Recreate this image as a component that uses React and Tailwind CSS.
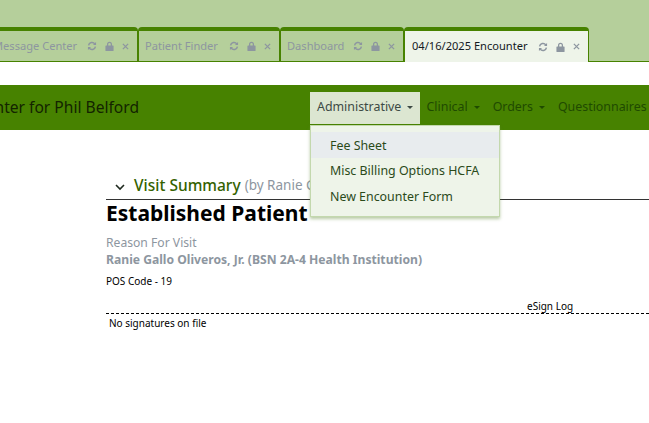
import React from "react";

const font = { fontFamily: '"Noto Sans", "Open Sans", sans-serif' };

function Icons() {
  return (
    <div className="flex items-center gap-[8px] shrink-0 text-[#8d96a0]">
      <svg width="10" height="10" viewBox="0 0 16 16" fill="none" stroke="currentColor" strokeWidth="2.4">
        <path d="M2.5 7a5.6 5.6 0 0 1 10-2.4" />
        <path d="M13.5 9a5.6 5.6 0 0 1-10 2.4" />
        <path d="M14.5 1.5v5h-5z" fill="currentColor" stroke="none" />
        <path d="M1.5 14.5v-5h5z" fill="currentColor" stroke="none" />
      </svg>
      <svg width="9" height="10" viewBox="0 0 14 16" fill="currentColor">
        <path d="M3 7V5a4 4 0 0 1 8 0v2h1.5a1 1 0 0 1 1 1v7a1 1 0 0 1-1 1h-11a1 1 0 0 1-1-1V8a1 1 0 0 1 1-1zm2 0h4V5a2 2 0 0 0-4 0z" />
      </svg>
      <svg width="7" height="7" viewBox="0 0 8 8" stroke="currentColor" strokeWidth="1.5">
        <path d="M1 1l6 6M7 1L1 7" />
      </svg>
    </div>
  );
}

function Tab({ label, width, active }) {
  return (
    <div
      className={`shrink-0 flex items-center justify-between pr-[8px] rounded-t-[4px] border-t-[4px] border-x border-[#478200] ${
        active ? "h-[35px] -mb-px pl-[7px] bg-[#eef4e9] text-[#14191f]" : "h-[34px] pl-[6px] bg-[#b5cf9b] text-[#8d96a0]"
      }`}
      style={{ width }}
    >
      <span className="text-[11.1px] whitespace-nowrap">{label}</span>
      <Icons />
    </div>
  );
}

function NavItem({ label, active }) {
  return (
    <div
      className={`shrink-0 flex items-center gap-[6px] h-[32px] text-[12.4px] whitespace-nowrap ${
        active ? "bg-[#dce6d1] text-[#3d4a45] pl-[7px] w-[110px]" : "text-[#1f4a00] px-[6.5px]"
      }`}
    >
      <span>{label}</span>
      {label !== "Questionnaires" && (
        <span className="w-0 h-0 border-x-[3px] border-x-transparent border-t-[3px] border-t-current" />
      )}
    </div>
  );
}

export default function App() {
  return (
    <div className="relative w-[649px] h-[423px] overflow-hidden bg-white" style={font}>
      <div className="h-[62px] bg-[#b5cf9b] border-b border-[#478200] flex items-end">
        <div className="flex items-end -ml-[14px]">
          <Tab label="Message Center" width={152} />
          <Tab label="Patient Finder" width={142} />
          <Tab label="Dashboard" width={124} />
          <Tab label="04/16/2025 Encounter" width={185} active />
        </div>
      </div>

      <div className="mt-[23px] h-[45px] bg-[#478200] flex items-center overflow-hidden">
        <div className="shrink-0 w-[310px] text-[15.6px] text-[#132400] whitespace-nowrap flex justify-end pr-[171px]">
          <span>nter for Phil Belford</span>
        </div>
        <NavItem label="Administrative" active />
        <NavItem label="Clinical" />
        <NavItem label="Orders" />
        <NavItem label="Questionnaires" />
      </div>

      <div className="pl-[106px] pt-[47px]">
        <div className="h-[23px] border-b border-[#333] flex items-start whitespace-nowrap">
          <svg width="10" height="7" viewBox="0 0 10 7" fill="none" stroke="#1f2a1f" strokeWidth="1.6" className="ml-[9px] mt-[7px] shrink-0">
            <path d="M1 1l4 4 4-4" />
          </svg>
          <span className="ml-[9px] text-[15.5px] leading-[17px] font-medium text-[#356200]">Visit Summary</span>
          <span className="ml-[4px] text-[13.5px] leading-[17px] text-[#8d96a0]">(by Ranie Gallo)</span>
        </div>
        <h1 className="text-[21px] leading-[26px] font-bold text-black whitespace-nowrap">Established Patient</h1>
        <div className="mt-[8px] text-[12.15px] leading-[17px] text-[#8d96a0]">Reason For Visit</div>
        <div className="text-[12.15px] leading-[17px] font-bold text-[#8d96a0] whitespace-nowrap">
          Ranie Gallo Oliveros, Jr. (BSN 2A-4 Health Institution)
        </div>
        <div className="mt-[6px] text-[10px] leading-[14px] text-black">POS Code - 19</div>
        <div className="mt-[11px] pl-[421px] text-[10px] leading-[14px] text-black whitespace-nowrap">eSign Log</div>
        <div className="border-t border-dashed border-black pl-[3px] pt-[2px] text-[10px] leading-[14px] text-black">
          No signatures on file
        </div>
      </div>

      <div className="absolute left-[310px] top-[125px] w-[190px] h-[92px] bg-[#eef4e9] border border-[#c3d8ad] shadow-[0_2px_3px_rgba(100,140,60,0.45)] pt-[6px] text-[12.4px] text-[#2b4a1a]">
        <div className="h-[26px] flex items-center pl-[19px] pt-[2px] bg-[#e8ecee]">Fee Sheet</div>
        <div className="h-[26px] flex items-center pl-[19px] whitespace-nowrap">Misc Billing Options HCFA</div>
        <div className="h-[26px] flex items-center pl-[19px]">New Encounter Form</div>
      </div>
    </div>
  );
}
